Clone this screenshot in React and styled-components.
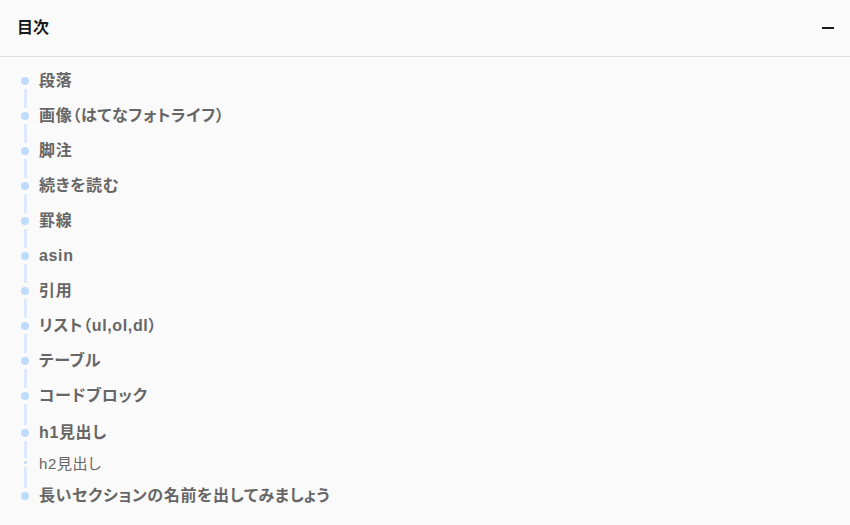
import React from 'react';
import styled, { createGlobalStyle } from 'styled-components';

const GlobalStyle = createGlobalStyle`
  html, body {
    margin: 0;
    padding: 0;
    background: #fafafa;
  }
  body {
    font-family: "Liberation Sans", "Noto Sans CJK JP", sans-serif;
    font-feature-settings: "palt";
  }
`;

const Panel = styled.div`
  width: 850px;
  height: 525px;
  background: #fafafa;
  overflow: hidden;
`;

const Header = styled.div`
  display: flex;
  align-items: center;
  justify-content: space-between;
  height: 56px;
  padding: 0 16px 0 17px;
  border-bottom: 1px solid #e0e0e0;
`;

const Title = styled.div`
  font-size: 16px;
  line-height: 1;
  font-weight: 700;
  color: #1a1a1a;
`;

const Minus = styled.span`
  display: block;
  width: 12px;
  height: 2px;
  background: #1a1a1a;
`;

const List = styled.ul`
  list-style: none;
  margin: 0;
  padding: 6px 17px 0 17px;
`;

const Item = styled.li`
  display: flex;
  align-items: stretch;
  height: ${(p) => p.$h}px;
`;

const Marker = styled.div`
  width: 16px;
  flex: none;
  display: flex;
  flex-direction: column;
  align-items: center;
`;

const Segment = styled.span`
  flex: 1;
  width: 3px;
  background: ${(p) => (p.$hidden ? 'transparent' : '#dbeafe')};
`;

const Dot = styled.span`
  flex: none;
  width: ${(p) => (p.$small ? 3 : 8)}px;
  height: ${(p) => (p.$small ? 3 : 8)}px;
  margin: ${(p) => (p.$small ? 3 : 4)}px 0;
  border-radius: 50%;
  background: #bfdbfe;
`;

const Label = styled.a`
  display: flex;
  align-items: center;
  margin-left: 6px;
  padding-top: 1px;
  line-height: 1;
  letter-spacing: 0.04em;
  font-size: ${(p) => (p.$sub ? 15 : 16)}px;
  font-weight: ${(p) => (p.$sub ? 400 : 700)};
  color: #666;
  text-decoration: none;
  white-space: nowrap;
`;

const items = [
  { text: '段落', h: 35 },
  { text: '画像（はてなフォトライフ）', h: 35 },
  { text: '脚注', h: 35 },
  { text: '続きを読む', h: 35 },
  { text: '罫線', h: 35 },
  { text: 'asin', h: 35 },
  { text: '引用', h: 35 },
  { text: 'リスト（ul,ol,dl）', h: 35 },
  { text: 'テーブル', h: 35 },
  { text: 'コードブロック', h: 35 },
  { text: 'h1見出し', h: 39 },
  { text: 'h2見出し', h: 21, sub: true },
  { text: '長いセクションの名前を出してみましょう', h: 45 },
];

const App = () => {
  return (
    <Panel>
      <GlobalStyle />
      <Header>
        <Title>目次</Title>
        <Minus />
      </Header>
      <List>
        {items.map((item, i) => (
          <Item key={i} $h={item.h}>
            <Marker>
              <Segment $hidden={i === 0} />
              <Dot $small={item.sub} />
              <Segment $hidden={i === items.length - 1} />
            </Marker>
            <Label href="#" $sub={item.sub}>
              {item.text}
            </Label>
          </Item>
        ))}
      </List>
    </Panel>
  );
};

export default App;
